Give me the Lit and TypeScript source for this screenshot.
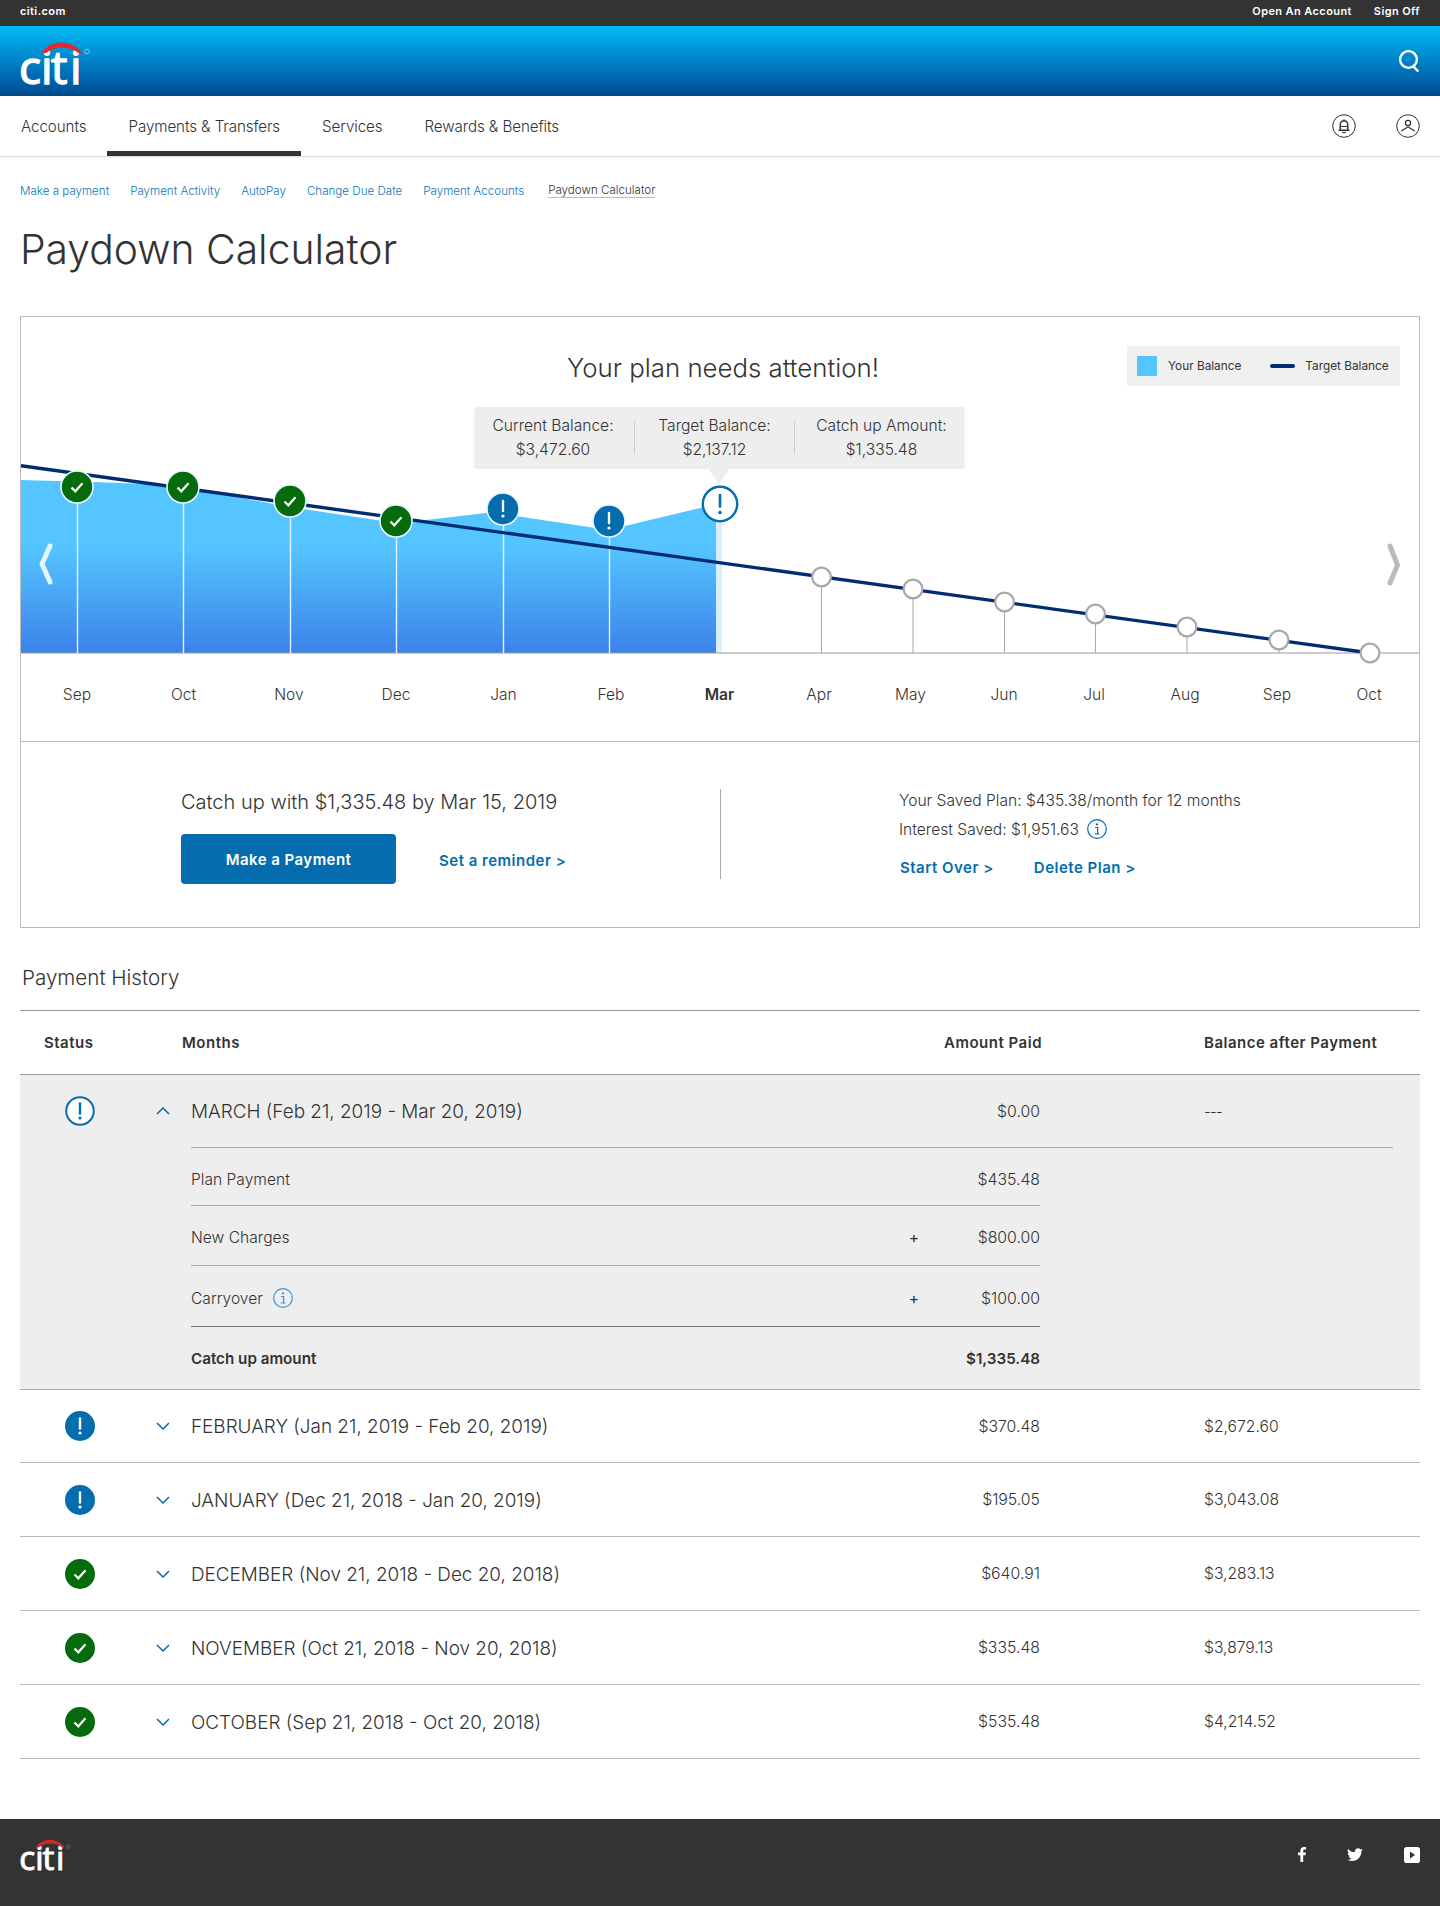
import { LitElement, html, svg, css } from "lit";
import { customElement } from "lit/decorators.js";

const NAVY = "#002d72";
const BLUE = "#056dae";
const GREEN = "#056b0c";

const subnav = ["Make a payment", "Payment Activity", "AutoPay", "Change Due Date", "Payment Accounts"];

const past = [
  { x: 77, y: 487, ok: true },
  { x: 183, y: 487, ok: true },
  { x: 290, y: 501, ok: true },
  { x: 396, y: 521, ok: true },
  { x: 503, y: 509, ok: false },
  { x: 609, y: 521, ok: false },
];

const future = [
  [821.5, 577],
  [913, 589],
  [1004.5, 602],
  [1095.5, 614],
  [1187, 627],
  [1279, 640],
  [1370, 653],
];

const labels: [string, number][] = [
  ["Sep", 77], ["Oct", 183.5], ["Nov", 289], ["Dec", 396], ["Jan", 503.5], ["Feb", 611], ["Mar", 719.5],
  ["Apr", 819], ["May", 910.5], ["Jun", 1004], ["Jul", 1094], ["Aug", 1185], ["Sep", 1277], ["Oct", 1369],
];

const rows = [
  { name: "FEBRUARY (Jan 21, 2019 - Feb 20, 2019)", paid: "$370.48", bal: "$2,672.60", ok: false },
  { name: "JANUARY (Dec 21, 2018 - Jan 20, 2019)", paid: "$195.05", bal: "$3,043.08", ok: false },
  { name: "DECEMBER (Nov 21, 2018 - Dec 20, 2018)", paid: "$640.91", bal: "$3,283.13", ok: true },
  { name: "NOVEMBER (Oct 21, 2018 - Nov 20, 2018)", paid: "$335.48", bal: "$3,879.13", ok: true },
  { name: "OCTOBER (Sep 21, 2018 - Oct 20, 2018)", paid: "$535.48", bal: "$4,214.52", ok: true },
];

function citiLogo(w: number, h: number, arc: string, mark: string) {
  return html`<svg class="logo" width=${w} height=${h} viewBox="0 0 72 48">
    <text x="-1 21 31 50" y="46.5" font-family="Open Sans" font-size="46" font-weight="400" fill="#fff" stroke="#fff" stroke-width="1.4">citi</text>
    <path d="M22 16 C 30 2, 52 2, 62 16 L 58.5 16 C 50 8.5, 34 8.5, 26 16 Z" fill=${arc} />
    <circle cx="67" cy="14.5" r="2.4" fill="none" stroke=${mark} stroke-width="1" />
  </svg>`;
}

function alertIcon(size = 30) {
  return html`<svg width=${size} height=${size} viewBox="0 0 30 30">
    <circle cx="15" cy="15" r="15" fill=${BLUE} />
    <path d="M15 7.5v10" stroke="#fff" stroke-width="2.4" stroke-linecap="round" />
    <circle cx="15" cy="22" r="1.6" fill="#fff" />
  </svg>`;
}

function okIcon() {
  return html`<svg width="30" height="30" viewBox="0 0 30 30">
    <circle cx="15" cy="15" r="15" fill=${GREEN} />
    <path d="M9.5 15.5l3.8 3.8 7.2-8" fill="none" stroke="#fff" stroke-width="2.2" />
  </svg>`;
}

function alertOutline() {
  return html`<svg width="30" height="30" viewBox="0 0 30 30">
    <circle cx="15" cy="15" r="13.8" fill="#fff" stroke=${BLUE} stroke-width="2" />
    <path d="M15 7.5v10" stroke=${BLUE} stroke-width="2.4" stroke-linecap="round" />
    <circle cx="15" cy="22" r="1.6" fill=${BLUE} />
  </svg>`;
}

function infoIcon(color: string) {
  return html`<svg class="info" width="20" height="20" viewBox="0 0 20 20">
    <circle cx="10" cy="10" r="9.3" fill="none" stroke=${color} stroke-width="1.2" />
    <circle cx="10" cy="5.4" r="1.1" fill=${color} />
    <path d="M8 8.5h2.6v6.2M7.8 15h4.6" fill="none" stroke=${color} stroke-width="1.2" />
  </svg>`;
}

function chevron(up: boolean) {
  return html`<svg width="14" height="8" viewBox="0 0 14 8">
    <path d=${up ? "M1 7l6-6 6 6" : "M1 1l6 6 6-6"} fill="none" stroke=${BLUE} stroke-width="1.5" />
  </svg>`;
}

// chart uses page coordinates through the viewBox, so the numbers read straight off the screen
function chart() {
  return html`<svg class="plot-svg" width="1398" height="424" viewBox="21 317 1398 424">
    <defs>
      <linearGradient id="bal" x1="0" y1="0" x2="0" y2="1">
        <stop offset="0.38" stop-color="#55c5ff" />
        <stop offset="1" stop-color="#3b82ea" />
      </linearGradient>
    </defs>
    <path
      d="M21 480 L92 482 L147 484 L183 487 L290 507 L396 523 L422 520.5 L503 511 L519 516.5 L609 530 L627 525.5 L700 508 L716 502 L716 653 L21 653 Z"
      fill="url(#bal)"
    />
    <rect x="716" y="510" width="6" height="143" fill="#d8efff" />
    <line x1="21" y1="653" x2="1419" y2="653" stroke="#999" stroke-width="1" />
    ${past.map((m) => svg`<line x1=${m.x + 0.5} y1=${m.y} x2=${m.x + 0.5} y2="653" stroke="#e4f4ff" stroke-width="1.4" />`)}
    ${future.map((m) => svg`<line x1=${m[0]} y1=${m[1]} x2=${m[0]} y2="653" stroke="#a8a8a8" stroke-width="1" />`)}
    <line x1="21" y1="465.7" x2="1370" y2="653" stroke=${NAVY} stroke-width="3.4" />
    ${past.map(
      (m) => svg`<circle cx=${m.x} cy=${m.y} r="16" fill=${m.ok ? GREEN : BLUE} stroke="#e8f6ff" stroke-width="1.6" />
      ${m.ok
        ? svg`<path d=${`M${m.x - 5.5} ${m.y + 0.5}l3.8 3.8 7.2-8`} fill="none" stroke="#fff" stroke-width="2.2" />`
        : svg`<path d=${`M${m.x} ${m.y - 8}v10`} stroke="#fff" stroke-width="2.4" stroke-linecap="round" /><circle cx=${m.x} cy=${m.y + 7} r="1.6" fill="#fff" />`}`
    )}
    <circle cx="720" cy="504" r="17.2" fill="#fff" stroke=${BLUE} stroke-width="2.4" />
    <path d="M720 495v11.5" stroke=${BLUE} stroke-width="2.6" stroke-linecap="round" />
    <circle cx="720" cy="512.5" r="1.8" fill=${BLUE} />
    ${future.map(
      (m) => svg`<circle cx=${m[0]} cy=${m[1]} r="9.4" fill="#fff" stroke="#a8a8a8" stroke-width="2.2" />`
    )}
    <path d="M50 546 L42 564 L50 582" fill="none" stroke="#e3f5ff" stroke-width="5" stroke-linecap="round" stroke-linejoin="round" />
    <path d="M1390 546 L1397.5 565 L1390 583" fill="none" stroke="#bbb" stroke-width="5" stroke-linecap="round" stroke-linejoin="round" />
    ${labels.map(
      (l) => svg`<text x=${l[1]} y="699.5" text-anchor="middle" class=${l[0] === "Mar" ? "mon cur" : "mon"}>${l[0]}</text>`
    )}
  </svg>`;
}

@customElement("app-root")
export class AppRoot extends LitElement {
  static styles = css`
    :host {
      display: block;
      width: 1440px;
      font-family: "Inter", "Liberation Sans", sans-serif;
      font-weight: 300;
      color: #333;
      background: #fff;
    }

    .topbar {
      height: 26px;
      background: #333;
      color: #fff;
      font-size: 11px;
      font-weight: 600;
      letter-spacing: 0.4px;
      display: flex;
      justify-content: space-between;
      padding: 0 20px;
      line-height: 22px;
    }
    .topbar .right {
      display: flex;
      gap: 22px;
    }

    .brand {
      height: 70px;
      background: linear-gradient(#00bdf6 0%, #0093d6 35%, #0063ab 78%, #004a8a 100%);
      display: flex;
      justify-content: space-between;
      align-items: center;
      padding: 0 20px;
    }
    .logo {
      display: block;
      overflow: visible;
    }

    .nav {
      height: 60px;
      border-bottom: 1px solid #dedede;
      box-shadow: 0 1px 2px rgba(0, 0, 0, 0.06);
      display: flex;
      align-items: stretch;
      padding-right: 20px;
      font-size: 15.2px;
      letter-spacing: -0.1px;
    }
    .nav a {
      padding: 0 21px;
      line-height: 61px;
      height: 55px;
      box-sizing: content-box;
      border-bottom: 5px solid transparent;
    }
    .nav a.active {
      border-bottom-color: #333;
    }
    .nav .icons {
      margin-left: auto;
      display: flex;
      align-items: center;
      gap: 40px;
    }

    .subnav {
      display: flex;
      gap: 21px;
      padding: 26px 20px 0;
      font-size: 11.6px;
      line-height: 16px;
      color: #0f76b5;
    }
    .subnav .cur {
      color: #333;
      margin-left: 3px;
      border-bottom: 1px solid #bbb;
      line-height: 14px;
      height: 14px;
    }

    h1 {
      margin: 22px 0 0 20px;
      font-size: 40.8px;
      line-height: 56px;
      font-weight: 300;
    }

    .card {
      margin: 39px 20px 0;
      border: 1px solid #bbb;
    }
    .plot {
      position: relative;
      height: 424px;
      border-bottom: 1px solid #bbb;
    }
    .plot-svg {
      position: absolute;
      left: 0;
      top: 0;
    }
    .mon {
      font-size: 15.6px;
      font-weight: 300;
      fill: #333;
    }
    .mon.cur {
      font-weight: 600;
    }
    .plot-title {
      position: absolute;
      left: 0;
      width: 1404px;
      top: 34px;
      text-align: center;
      font-size: 25.8px;
      line-height: 34px;
    }
    .legend {
      position: absolute;
      left: 1106px;
      top: 29px;
      width: 273px;
      height: 40px;
      background: #f0f0f0;
      display: flex;
      align-items: center;
      font-size: 11.8px;
      font-weight: 400;
      box-sizing: border-box;
      padding-left: 10px;
    }
    .legend .sw {
      width: 20px;
      height: 20px;
      background: #55c5ff;
      margin-right: 11px;
    }
    .legend .ln {
      width: 25px;
      height: 4px;
      border-radius: 2px;
      background: #002d72;
      margin: 0 10px 0 29px;
    }

    .tip {
      position: absolute;
      left: 454px;
      top: 90px;
      width: 489px;
      height: 60px;
      background: #eee;
      box-shadow: 0 1px 2px rgba(0, 0, 0, 0.15);
      display: grid;
      grid-template-columns: 159px 160px 170px;
      align-items: center;
      font-size: 15.6px;
      line-height: 24px;
      text-align: center;
    }
    .tip::after {
      content: "";
      position: absolute;
      left: 232px;
      top: 60px;
      border-left: 12px solid transparent;
      border-right: 12px solid transparent;
      border-top: 17px solid #eee;
    }
    .tip > div {
      height: 32px;
      padding-top: 1px;
      display: flex;
      flex-direction: column;
      justify-content: center;
    }
    .tip > div + div {
      border-left: 1px solid #ccc;
    }
    .tip > div:first-child {
      padding-right: 3px;
    }
    .tip > div:last-child {
      padding-left: 4px;
    }

    .plan {
      height: 185px;
      display: flex;
    }
    .plan .l {
      width: 699px;
      box-sizing: border-box;
      padding: 45px 0 0 160px;
    }
    .plan .head {
      font-size: 20px;
      line-height: 30px;
      margin-bottom: 17px;
    }
    .plan .acts {
      display: flex;
      align-items: center;
      gap: 43px;
    }
    .btn {
      width: 215px;
      height: 50px;
      background: #056dae;
      color: #fff;
      border-radius: 4px;
      font-size: 15px;
      font-weight: 600;
      letter-spacing: 0.45px;
      line-height: 51px;
      text-align: center;
    }
    .lnk {
      color: #056dae;
      font-size: 15px;
      font-weight: 600;
      letter-spacing: 0.5px;
    }
    .acts .lnk {
      margin-top: 2px;
    }
    .plan .r {
      margin-top: 47px;
      height: 90px;
      border-left: 1px solid #aaa;
      padding-left: 178px;
      font-size: 15.6px;
      line-height: 24px;
    }
    .plan .int {
      display: flex;
      align-items: center;
      gap: 8px;
      margin-top: 5px;
    }
    .plan .int .info {
      margin-bottom: 3px;
    }
    .plan .links {
      display: flex;
      gap: 40px;
      margin: 14px 0 0 1px;
    }

    h2 {
      margin: 35px 0 17px 22px;
      font-size: 20.6px;
      line-height: 30px;
      font-weight: 300;
    }

    .table {
      margin: 0 20px;
      border-top: 1px solid #999;
    }
    .grid {
      display: grid;
      grid-template-columns: 136px 35px 1fr 150px 380px;
      align-items: center;
    }
    .thead {
      height: 63px;
      border-bottom: 1px solid #999;
      font-size: 15px;
      font-weight: 600;
      letter-spacing: 0.5px;
    }
    .thead .st {
      padding-left: 24px;
    }
    .thead .mo {
      grid-column: 2 / 4;
      margin-left: 26px;
    }
    .thead .am {
      text-align: right;
      margin-right: -2px;
    }
    .bal {
      padding-left: 164px;
      font-size: 15.7px;
    }
    .thead .bal {
      font-size: 15px;
    }
    .bal.none {
      letter-spacing: -0.8px;
      font-size: 15px;
    }
    .amt {
      text-align: right;
      font-size: 15.8px;
    }
    .status {
      padding-left: 45px;
      display: flex;
    }
    .chev {
      display: flex;
    }
    .name {
      font-size: 18.9px;
    }
    .row .name {
      padding-top: 1px;
    }

    .open {
      background: #eee;
      height: 314px;
      border-bottom: 1px solid #aaa;
    }
    .open .sum {
      height: 72px;
    }
    .open .line {
      height: 1px;
      background: #aaa;
      margin: 0 27px 0 171px;
    }
    .subs {
      margin: 0 380px 0 171px;
    }
    .sub {
      height: 58px;
      padding-top: 5px;
      box-sizing: border-box;
      border-bottom: 1px solid #aaa;
      display: flex;
      align-items: center;
      font-size: 15.6px;
    }
    .sub .lab {
      display: flex;
      align-items: center;
      gap: 10px;
    }
    .sub .plus {
      margin-left: auto;
      width: 12px;
      text-align: center;
      font-weight: 400;
    }
    .sub .val {
      margin-left: auto;
      font-size: 15.8px;
    }
    .sub .plus + .val {
      margin-left: 0;
      width: 120px;
      text-align: right;
    }
    .sub.wide {
      height: 59.5px;
    }
    .sub.tall {
      height: 61px;
      border-bottom-color: #777;
    }
    .sub.total {
      height: 59.5px;
      border-bottom: 0;
      font-weight: 600;
      font-size: 15.2px;
    }
    .sub.total .val {
      font-size: 15.2px;
    }

    .row {
      height: 74px;
      border-bottom: 1px solid #bbb;
      box-sizing: border-box;
    }
    .row.first {
      height: 73px;
    }

    .footer {
      margin-top: 60px;
      height: 87px;
      background: #333;
      display: flex;
      justify-content: space-between;
      padding: 16.5px 20px 0;
      box-sizing: border-box;
    }
    .social {
      display: flex;
      align-items: center;
      height: 38px;
      gap: 41px;
    }
  `;

  render() {
    return html`
      <div class="topbar">
        <span>citi.com</span>
        <div class="right"><span>Open An Account</span><span>Sign Off</span></div>
      </div>
      <div class="brand">
        ${citiLogo(72, 48, "#e8262b", "#7cc8ea")}
        <svg width="22" height="22" viewBox="0 0 22 22">
          <circle cx="10.5" cy="9.5" r="8.4" fill="none" stroke="#fff" stroke-width="2.4" />
          <path d="M15.5 16.5l4.8 5" stroke="#fff" stroke-width="2.4" />
        </svg>
      </div>
      <div class="nav">
        <a>Accounts</a>
        <a class="active">Payments &amp; Transfers</a>
        <a>Services</a>
        <a>Rewards &amp; Benefits</a>
        <div class="icons">
          <svg width="24" height="24" viewBox="0 0 24 24" fill="none" stroke="#333">
            <circle cx="12" cy="12" r="11.3" stroke-width="1" />
            <path d="M8.3 16V10.5a3.7 3.7 0 0 1 7.4 0V16M6.5 16.3h11" stroke-width="1.5" />
            <path d="M8.3 12.5h7.4M12 5.2v1.6" stroke-width="1" />
            <path d="M10.5 17.8a1.6 1.6 0 0 0 3 0" stroke-width="1.2" />
          </svg>
          <svg width="24" height="24" viewBox="0 0 24 24" fill="none" stroke="#333">
            <circle cx="12" cy="12" r="11.3" stroke-width="1" />
            <circle cx="12" cy="9" r="2.6" stroke-width="1.2" />
            <path d="M5.2 17l6.8-4 6.8 4" stroke-width="1.2" />
          </svg>
        </div>
      </div>
      <div class="subnav">
        ${subnav.map((s) => html`<a>${s}</a>`)}
        <a class="cur">Paydown Calculator</a>
      </div>
      <h1>Paydown Calculator</h1>

      <div class="card">
        <div class="plot">
          ${chart()}
          <div class="plot-title">Your plan needs attention!</div>
          <div class="legend">
            <span class="sw"></span>Your Balance<span class="ln"></span>Target Balance
          </div>
          <div class="tip">
            <div><span>Current Balance:</span><span>$3,472.60</span></div>
            <div><span>Target Balance:</span><span>$2,137.12</span></div>
            <div><span>Catch up Amount:</span><span>$1,335.48</span></div>
          </div>
        </div>
        <div class="plan">
          <div class="l">
            <div class="head">Catch up with $1,335.48 by Mar 15, 2019</div>
            <div class="acts">
              <a class="btn">Make a Payment</a>
              <a class="lnk">Set a reminder &gt;</a>
            </div>
          </div>
          <div class="r">
            <div>Your Saved Plan: $435.38/month for 12 months</div>
            <div class="int">Interest Saved: $1,951.63 ${infoIcon(BLUE)}</div>
            <div class="links">
              <a class="lnk">Start Over &gt;</a>
              <a class="lnk">Delete Plan &gt;</a>
            </div>
          </div>
        </div>
      </div>

      <h2>Payment History</h2>
      <div class="table">
        <div class="grid thead">
          <div class="st">Status</div>
          <div class="mo">Months</div>
          <div class="am">Amount Paid</div>
          <div class="bal">Balance after Payment</div>
        </div>
        <div class="open">
          <div class="grid sum">
            <div class="status">${alertOutline()}</div>
            <div class="chev">${chevron(true)}</div>
            <div class="name">MARCH (Feb 21, 2019 - Mar 20, 2019)</div>
            <div class="amt">$0.00</div>
            <div class="bal none">---</div>
          </div>
          <div class="line"></div>
          <div class="subs">
            <div class="sub"><span class="lab">Plan Payment</span><span class="val">$435.48</span></div>
            <div class="sub wide">
              <span class="lab">New Charges</span><span class="plus">+</span><span class="val">$800.00</span>
            </div>
            <div class="sub tall">
              <span class="lab">Carryover ${infoIcon("#3d8fe0")}</span><span class="plus">+</span
              ><span class="val">$100.00</span>
            </div>
            <div class="sub total"><span class="lab">Catch up amount</span><span class="val">$1,335.48</span></div>
          </div>
        </div>
        ${rows.map(
          (r, i) => html`<div class="grid row ${i === 0 ? "first" : ""}">
            <div class="status">${r.ok ? okIcon() : alertIcon()}</div>
            <div class="chev">${chevron(false)}</div>
            <div class="name">${r.name}</div>
            <div class="amt">${r.paid}</div>
            <div class="bal">${r.bal}</div>
          </div>`
        )}
      </div>

      <div class="footer">
        ${citiLogo(52, 34.7, "#d9262b", "#777")}
        <div class="social">
          <svg width="8" height="15" viewBox="0 0 8 15"><path d="M2.4 15V8.2H0V5.6h2.4V3.6C2.4 1.2 3.8 0 5.9 0c1 0 1.8.1 2.1.1v2.3H6.6c-1.1 0-1.4.6-1.4 1.3v1.9h2.7L7.5 8.2H5.2V15z" fill="#fff"/></svg>
          <svg width="16" height="14" viewBox="0 0 24 20"><path d="M24 2.4c-.9.4-1.8.7-2.8.8 1-.6 1.8-1.6 2.2-2.7-1 .6-2 1-3.1 1.2C19.3.7 18 0 16.6 0c-2.7 0-4.9 2.2-4.9 4.9 0 .4 0 .8.1 1.1C7.700 5.800 4.100 3.900 1.700.9c-.4.7-.7 1.600-.7 2.500 0 1.700.9 3.200 2.200 4.100-.8 0-1.600-.2-2.200-.6v.1c0 2.400 1.700 4.400 3.900 4.800-.4.1-.8.2-1.300.2-.3 0-.6 0-.9-.1.6 2 2.400 3.400 4.600 3.400-1.700 1.300-3.800 2.100-6.100 2.100-.4 0-.8 0-1.200-.1C2.200 18.300 4.800 19 7.500 19c9.100 0 14-7.500 14-14v-.6c1-.7 1.800-1.500 2.500-2z" fill="#fff"/></svg>
          <svg width="16" height="16" viewBox="0 0 16 16"><rect width="16" height="16" rx="2.5" fill="#fff"/><path d="M6 4.500l5 3.500-5 3.500z" fill="#333"/></svg>
        </div>
      </div>
    `;
  }
}
